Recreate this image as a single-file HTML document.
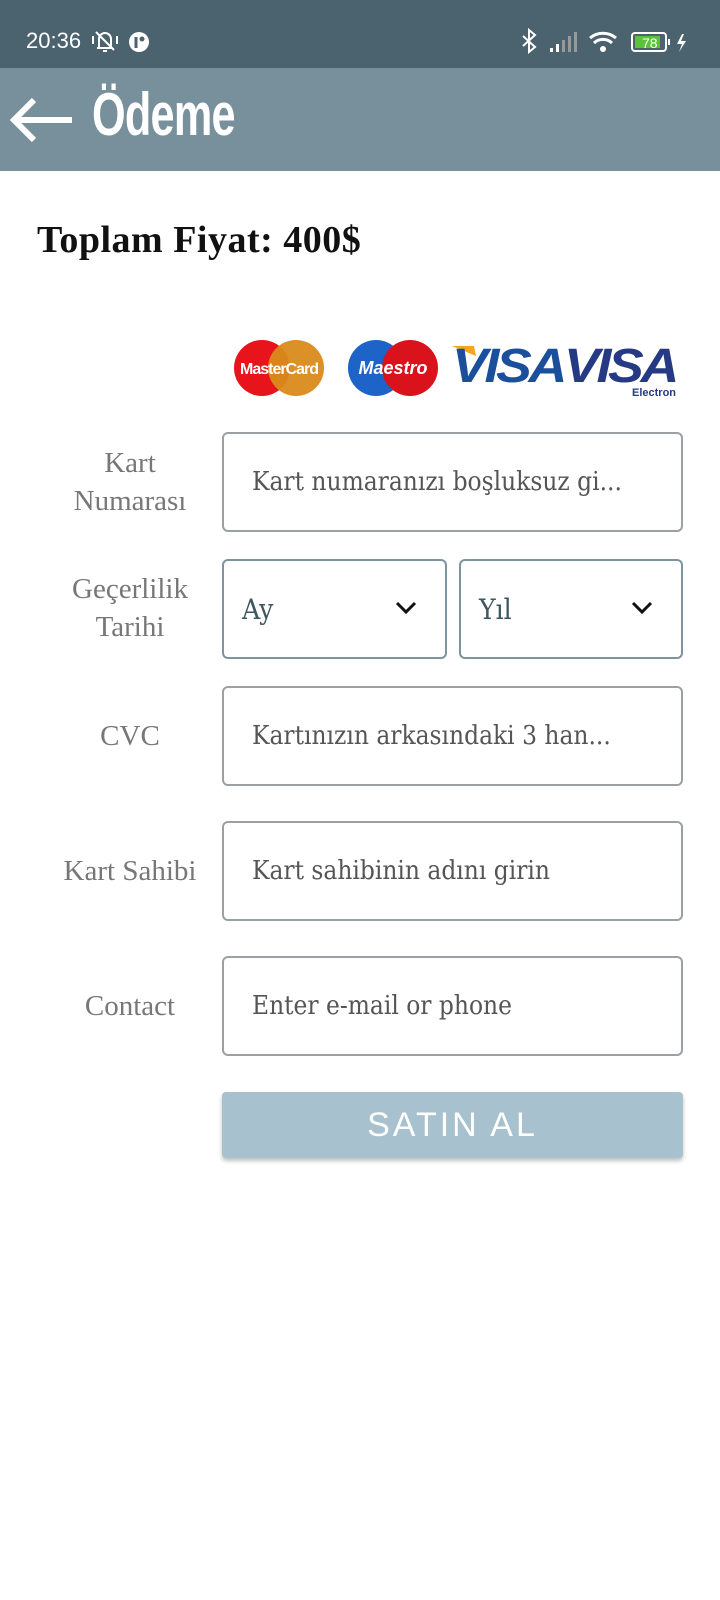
<!DOCTYPE html>
<html><head><meta charset="utf-8"><style>
*{margin:0;padding:0;box-sizing:border-box}
body{width:720px;height:1600px;background:#fff;position:relative;overflow:hidden;font-family:"Liberation Serif",serif}
.sb{position:absolute;left:0;top:0;width:720px;height:68px;background:#4b636f;color:#fff}
.hd{position:absolute;left:0;top:68px;width:720px;height:103px;background:#78909c}
.lbl{position:absolute;left:40px;width:180px;text-align:center;color:#777;font-size:29px;line-height:38px}
.box{position:absolute;border:2px solid #9aa0a4;border-radius:6px;background:#fff;font-family:"DejaVu Serif Condensed","DejaVu Serif",serif;color:#555;font-size:26px;padding-left:28px;display:flex;align-items:center;white-space:nowrap;overflow:hidden}
.sel{border-color:#7d939e;color:#3f5560;padding-left:18px;font-size:28px}
.chev{position:absolute;right:28px;top:40px}
</style></head><body>
<div class="sb">
 <div style="position:absolute;left:26px;top:28px;font-family:'Liberation Sans',sans-serif;font-size:22px">20:36</div>
 <svg style="position:absolute;left:90px;top:28px" width="30" height="26" viewBox="0 0 30 26"><path d="M9 20V11a6 6 0 0112 0v9H7M13 23h4M6 4l18 18M3 8v8M27 8v8" stroke="#fff" stroke-width="2" fill="none"/></svg>
 <svg style="position:absolute;left:128px;top:31px" width="22" height="22"><circle cx="11" cy="11" r="10" fill="#fff"/><path d="M8 6v11" stroke="#4b636f" stroke-width="3"/><circle cx="14" cy="8" r="2.5" fill="#4b636f"/></svg>
 <svg style="position:absolute;left:520px;top:28px" width="180" height="28">
  <path d="M3 8l12 11-6 5V2l6 5L3 18" stroke="#fff" stroke-width="2" fill="none"/>
  <rect x="30" y="20" width="3" height="4" fill="#fff"/><rect x="36" y="16" width="3" height="8" fill="#fff"/><rect x="42" y="12" width="3" height="12" fill="#999"/><rect x="48" y="8" width="3" height="16" fill="#999"/><rect x="54" y="4" width="3" height="20" fill="#999"/>
  <path d="M70 10a20 20 0 0126 0M74 15a13 13 0 0118 0" stroke="#fff" stroke-width="3" fill="none"/><circle cx="83" cy="21" r="3" fill="#fff"/>
  <rect x="112" y="5" width="34" height="18" rx="3" stroke="#fff" stroke-width="2" fill="none"/><rect x="115" y="8" width="25" height="12" fill="#5cc23a"/><text x="122" y="20" font-family="Liberation Sans" font-size="14" fill="#fff">78</text><rect x="148" y="11" width="2" height="6" fill="#fff"/>
  <path d="M162 6l-5 10h5l-3 8 7-11h-5l3-7z" fill="#fff"/>
 </svg>
</div>
<div class="hd">
 <svg style="position:absolute;left:8px;top:28px" width="68" height="48"><path d="M64 24H6M26 4L6 24l20 20" stroke="#fff" stroke-width="6" fill="none"/></svg>
 <div style="position:absolute;left:92px;top:12px;color:#fff;font-family:'Liberation Sans Narrow','Liberation Sans',sans-serif;font-weight:bold;font-size:60px;transform:scaleX(0.72);transform-origin:left;letter-spacing:-1px">Ödeme</div>
</div>
<div style="position:absolute;left:37px;top:218px;font-size:38px;font-weight:bold;color:#111;letter-spacing:0.5px">Toplam Fiyat: 400$</div>
<svg style="position:absolute;left:230px;top:336px" width="460" height="64">
 <circle cx="32" cy="32" r="28" fill="#e8141b"/><circle cx="66" cy="32" r="28" fill="#d98a1c" opacity=".95"/>
 <text x="49" y="38" text-anchor="middle" font-family="Liberation Sans" font-weight="bold" font-size="16" fill="#fff" letter-spacing="-1">MasterCard</text>
 <circle cx="146" cy="32" r="28" fill="#1e64c8"/><circle cx="180" cy="32" r="28" fill="#d9121b"/>
 <text x="163" y="38" text-anchor="middle" font-family="Liberation Sans" font-style="italic" font-weight="bold" font-size="18" fill="#fff">Maestro</text>
 <path d="M222 10h22l2 10z" fill="#f3a81c"/>
 <text x="222" y="46" font-family="Liberation Sans" font-style="italic" font-weight="bold" font-size="48" fill="#1b4f9c" letter-spacing="-3" textLength="112" lengthAdjust="spacingAndGlyphs">VISA</text>
 <text x="334" y="46" font-family="Liberation Sans" font-style="italic" font-weight="bold" font-size="48" fill="#263a84" letter-spacing="-3" textLength="112" lengthAdjust="spacingAndGlyphs">VISA</text>
 <text x="402" y="60" font-family="Liberation Sans" font-weight="bold" font-size="11" fill="#263a84">Electron</text>
</svg>
<div class="lbl" style="top:444px">Kart<br>Numarası</div>
<div class="box" style="left:222px;top:432px;width:461px;height:100px">Kart numaranızı boşluksuz gi...</div>
<div class="lbl" style="top:570px">Geçerlilik<br>Tarihi</div>
<div class="box sel" style="left:222px;top:559px;width:225px;height:100px">Ay<svg class="chev" width="22" height="14"><path d="M2 2l9 9 9-9" stroke="#111" stroke-width="3" fill="none"/></svg></div>
<div class="box sel" style="left:459px;top:559px;width:224px;height:100px">Yıl<svg class="chev" width="22" height="14"><path d="M2 2l9 9 9-9" stroke="#111" stroke-width="3" fill="none"/></svg></div>
<div class="lbl" style="top:717px">CVC</div>
<div class="box" style="left:222px;top:686px;width:461px;height:100px">Kartınızın arkasındaki 3 han...</div>
<div class="lbl" style="top:852px">Kart Sahibi</div>
<div class="box" style="left:222px;top:821px;width:461px;height:100px">Kart sahibinin adını girin</div>
<div class="lbl" style="top:987px">Contact</div>
<div class="box" style="left:222px;top:956px;width:461px;height:100px">Enter e-mail or phone</div>
<div style="position:absolute;left:222px;top:1092px;width:461px;height:66px;background:#a7c1cf;border-radius:4px;box-shadow:0 3px 4px rgba(0,0,0,.25);color:#fff;font-family:'Liberation Sans',sans-serif;font-size:34px;letter-spacing:3px;text-align:center;line-height:66px">SATIN AL</div>
</body></html>
